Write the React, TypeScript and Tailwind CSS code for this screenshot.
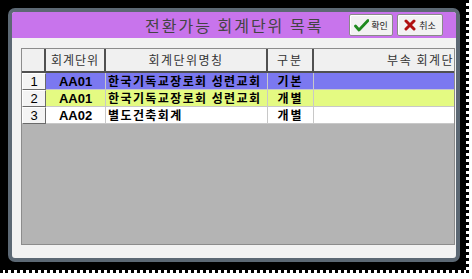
import React from "react";

const KR = '"Noto Sans CJK KR", "Liberation Sans", sans-serif';

function Check() {
  return (
    <svg width="15" height="13" viewBox="0 0 15 13">
      <path d="M1.5 7 L5 11 L14 1.5" stroke="#1f8a1f" strokeWidth="2.8" fill="none" strokeLinecap="round" strokeLinejoin="round" />
    </svg>
  );
}

function Cross() {
  return (
    <svg width="12" height="12" viewBox="0 0 12 12">
      <path d="M2 2 L10 10 M10 2 L2 10" stroke="#b01010" strokeWidth="3" fill="none" strokeLinecap="round" />
    </svg>
  );
}

const rows = [
  { n: "1", code: "AA01", name: "한국기독교장로회 성련교회", kind: "기본", bg: "bg-[#7b78f0]" },
  { n: "2", code: "AA01", name: "한국기독교장로회 성련교회", kind: "개별", bg: "bg-[#e4fa82]" },
  { n: "3", code: "AA02", name: "별도건축회계", kind: "개별", bg: "bg-white" },
];

export default function App() {
  return (
    <div className="w-[472px] h-[279px] bg-white overflow-hidden" style={{ fontFamily: KR }}>
      <div className="w-[469px] h-[273px] border-r-[3px] border-b-[3px] border-dotted border-black">
        <div className="w-full h-full bg-black pl-[8px] pt-[8px] pr-[6px] pb-[8px] flex">
          <div className="flex-1 flex flex-col rounded-[7px] border-[4px] border-[#5c6874] bg-[#f2f2f2] overflow-hidden">
            <div className="h-[26px] bg-[#c874ec] flex items-center shrink-0">
              <div className="ml-[133px] text-[16px] leading-none text-[#444] tracking-[2px]">
                전환가능 회계단위 목록
              </div>
              <div className="ml-auto mr-[13px] flex gap-[4px]">
                <div className="w-[44px] h-[22px] bg-[#f2f2f2] border border-[#8a8a8a] rounded-[2px] flex items-center justify-center gap-[2px] shadow-[inset_1px_1px_0_#ffffff]">
                  <Check />
                  <span className="text-[9px] leading-none text-[#222]">확인</span>
                </div>
                <div className="w-[46px] h-[22px] bg-[#f2f2f2] border border-[#8a8a8a] rounded-[2px] flex items-center justify-center gap-[3px] shadow-[inset_1px_1px_0_#ffffff]">
                  <Cross />
                  <span className="text-[9px] leading-none text-[#222]">취소</span>
                </div>
              </div>
            </div>
            <div className="flex-1 pt-[10px] pl-[9px] pr-[1px] pb-[13px] flex">
              <div className="flex-1 bg-[#b4b4b4] border border-[#8c8c8c] flex flex-col overflow-hidden">
                <div className="h-[24px] flex bg-[#f0f0f0] border-b-[2px] border-[#505050] text-[12px] text-[#333] shrink-0">
                  <div className="w-[24px] border-r-[2px] border-[#505050]" />
                  <div className="w-[60px] border-r-[2px] border-[#505050] flex items-center justify-center tracking-[1px]">회계단위</div>
                  <div className="w-[162px] border-r-[2px] border-[#505050] flex items-center justify-center tracking-[1.5px]">회계단위명칭</div>
                  <div className="w-[46px] border-r-[2px] border-[#505050] flex items-center justify-center tracking-[2px]">구분</div>
                  <div className="flex-1 flex items-center justify-end whitespace-nowrap overflow-hidden tracking-[1.5px]">부속 회계단</div>
                </div>
                {rows.map((r) => (
                  <div key={r.n} className="h-[17px] flex shrink-0 text-[12px] font-bold text-black leading-none">
                    <div className="w-[24px] bg-[#f4f4f4] border border-t-white border-l-white border-r-[#6a6a6a] border-b-[#6a6a6a] flex items-center justify-center font-normal text-[13px]" style={{ fontFamily: '"Liberation Sans", sans-serif' }}>
                      {r.n}
                    </div>
                    <div className={`flex-1 flex ${r.bg}`}>
                      <div className="w-[60px] border-r border-b border-[#c8c8c8] flex items-center justify-center text-[13px]" style={{ fontFamily: '"Liberation Sans", sans-serif', fontWeight: 600 }}>
                        {r.code}
                      </div>
                      <div className="w-[162px] border-r border-b border-[#c8c8c8] flex items-center pl-[2px] whitespace-nowrap overflow-hidden tracking-[1.4px]">
                        {r.name}
                      </div>
                      <div className="w-[46px] border-r border-b border-[#c8c8c8] flex items-center justify-center tracking-[2px]">
                        {r.kind}
                      </div>
                      <div className="flex-1 border-b border-[#c8c8c8]" />
                    </div>
                  </div>
                ))}
                <div className="flex-1" />
              </div>
            </div>
          </div>
        </div>
      </div>
    </div>
  );
}
